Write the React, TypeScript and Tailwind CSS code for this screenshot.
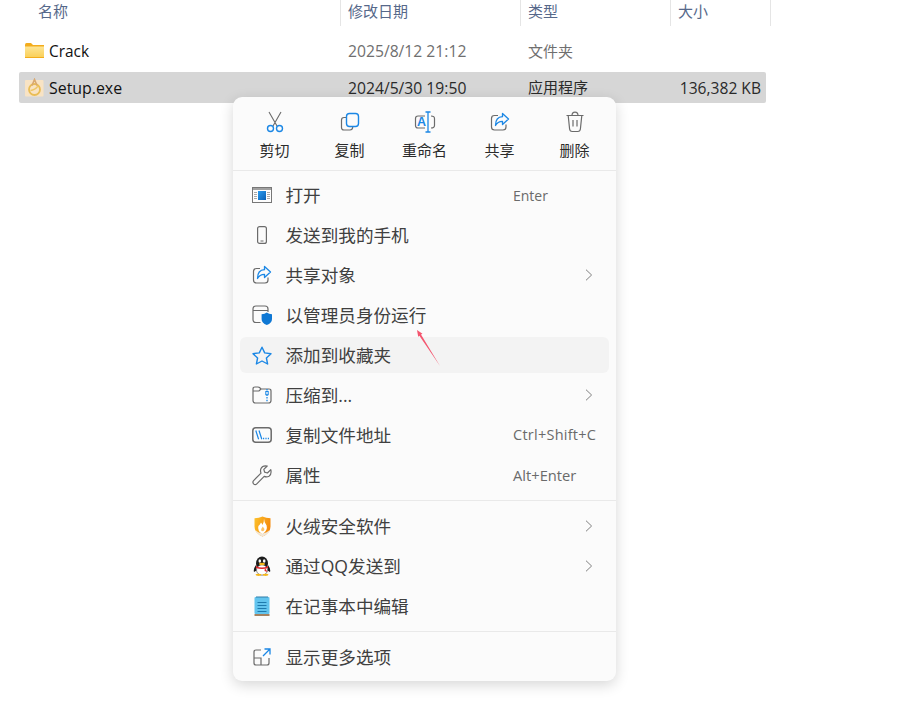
import type { ReactNode } from "react";

const gray = "#6b6b6b";
const blue = "#1b87e5";

function CutIcon() {
    return (
        <svg width="20" height="22" viewBox="0 0 20 22" fill="none">
            <path d="M4 1 L12 15 M16 1 L8 15" stroke={gray} strokeWidth="1.1" />
            <circle cx="5.5" cy="17.5" r="3" stroke={blue} strokeWidth="1.4" />
            <circle cx="14.5" cy="17.5" r="3" stroke={blue} strokeWidth="1.4" />
        </svg>
    );
}

function CopyIcon() {
    return (
        <svg width="20" height="20" viewBox="0 0 20 20" fill="none">
            <path d="M6 5.5 H4 Q1.5 5.5 1.5 8 V15.5 Q1.5 18 4 18 H10 Q12.5 18 12.8 15" stroke={gray} strokeWidth="1.2" />
            <rect x="6.5" y="1.5" width="12" height="13" rx="3" stroke={blue} strokeWidth="1.4" />
        </svg>
    );
}

function RenameIcon() {
    return (
        <svg width="22" height="22" viewBox="0 0 22 22" fill="none">
            <path d="M11 5 H4 Q1.5 5 1.5 7.5 V14.5 Q1.5 17 4 17 H11 M17 5 Q20.5 5 20.5 7.5 V14.5 Q20.5 17 17 17" stroke={gray} strokeWidth="1.2" />
            <path d="M14 1 V21 M11.5 1 H16.5 M11.5 21 H16.5" stroke={blue} strokeWidth="1.3" />
            <text x="7.6" y="15.2" textAnchor="middle" fontSize="12.5" fontWeight="600" fontFamily="Liberation Sans, sans-serif" fill={blue}>A</text>
        </svg>
    );
}

function ShareIcon() {
    return (
        <svg width="20" height="20" viewBox="0 0 20 20" fill="none">
            <path d="M8 3.5 H4.5 Q1.5 3.5 1.5 6.5 V15 Q1.5 18 4.5 18 H13 Q16 18 16 15 V12.5" stroke={gray} strokeWidth="1.2" />
            <path d="M12.5 1.5 L18.5 7 L12.5 12.5 V9.3 Q7.5 9.3 5.5 13.5 Q5.5 5 12.5 4.7 Z" stroke={blue} strokeWidth="1.3" strokeLinejoin="round" />
        </svg>
    );
}

function TrashIcon() {
    return (
        <svg width="20" height="22" viewBox="0 0 20 22" fill="none" stroke={gray} strokeWidth="1.2">
            <path d="M1.5 4.5 H18.5 M7 4.5 Q7 1.2 10 1.2 Q13 1.2 13 4.5" />
            <path d="M3.2 4.5 L4.6 18 Q4.9 20.5 7.2 20.5 H12.8 Q15.1 20.5 15.4 18 L16.8 4.5" />
            <path d="M8 9 V15.5 M12 9 V15.5" />
        </svg>
    );
}

function OpenIcon() {
    return (
        <svg width="20" height="16" viewBox="0 0 20 16" fill="none">
            <defs>
                <linearGradient id="open-fill" x1="0" y1="0" x2="1" y2="1">
                    <stop offset="0" stopColor="#2a9cf0" />
                    <stop offset="1" stopColor="#0a5fb4" />
                </linearGradient>
            </defs>
            <rect x="0.5" y="0.5" width="19" height="15" fill="#fdfdfd" stroke="#777" />
            <rect x="1" y="1" width="18" height="2" fill="#a0a0a0" />
            <path d="M2 5.5 H5 M2 7.5 H5 M2 9.5 H5 M2 11.5 H5 M15 5.5 H18 M15 7.5 H18 M15 9.5 H18 M15 11.5 H18" stroke="#a8a8a8" />
            <rect x="6" y="4" width="8" height="9" fill="url(#open-fill)" />
        </svg>
    );
}

function PhoneIcon() {
    return (
        <svg width="10" height="18" viewBox="0 0 10 18" fill="none">
            <rect x="0.6" y="0.6" width="8.8" height="16.8" rx="2" stroke={gray} strokeWidth="1.2" />
            <path d="M3.5 15 H6.5" stroke={gray} />
        </svg>
    );
}

function AdminIcon() {
    return (
        <svg width="20" height="20" viewBox="0 0 20 20" fill="none">
            <path d="M8.5 17.5 H4 Q1 17.5 1 14.5 V4 Q1 1 4 1 H13 Q16 1 16 4 V7 M1 5.5 H16" stroke={gray} strokeWidth="1.2" />
            <path d="M14.8 7.5 Q16.8 9.3 20 9.3 V14 Q20 18 14.8 20 Q9.6 18 9.6 14 V9.3 Q12.8 9.3 14.8 7.5 Z" fill="#0f78d4" />
        </svg>
    );
}

function StarIcon() {
    return (
        <svg width="20" height="19" viewBox="0 0 20 19" fill="none">
            <path d="M10 1.2 L12.7 6.9 L19 7.7 L14.4 12 L15.6 18 L10 15 L4.4 18 L5.6 12 L1 7.7 L7.3 6.9 Z" stroke={blue} strokeWidth="1.4" strokeLinejoin="round" />
        </svg>
    );
}

function ZipIcon() {
    return (
        <svg width="20" height="18" viewBox="0 0 20 18" fill="none">
            <path d="M1 3 V14.5 Q1 17 3.5 17 H16.5 Q19 17 19 14.5 V5 Q19 3 17 3 H9 L7.5 1.5 Q7 1 6 1 H3 Q1 1 1 3 V5 H7 L9 3" stroke={gray} strokeWidth="1.2" />
            <path d="M15 3 V16.5" stroke={blue} strokeWidth="1.3" strokeDasharray="1.5 1.2" />
            <rect x="13.8" y="5.5" width="2.4" height="3.2" fill="#fbfbfb" stroke={blue} strokeWidth="1" />
        </svg>
    );
}

function PathIcon() {
    return (
        <svg width="20" height="16" viewBox="0 0 20 16" fill="none">
            <rect x="0.8" y="0.8" width="18.4" height="14.4" rx="3" stroke={gray} strokeWidth="1.5" />
            <path d="M3.8 3.5 L6.6 12.3 M7 3.5 L9.8 12.3" stroke={blue} strokeWidth="1.2" />
            <path d="M11 11.5 H12.2 M13.4 11.5 H14.6 M15.8 11.5 H17" stroke={blue} strokeWidth="1.3" />
        </svg>
    );
}

function WrenchIcon() {
    return (
        <svg width="20" height="21" viewBox="0 0 20 21" fill="none">
            <path d="M18.8 4.6 L15.4 8 L12.6 7.2 L11.8 4.4 L15.2 1 Q10.5 0.2 9 3.5 Q8 5.8 9 8.2 L1.6 15.6 Q0.2 17.2 1.6 18.8 Q3.2 20.4 4.8 18.8 L12.2 11.4 Q14.8 12.4 17 11.2 Q19.8 9.4 18.8 4.6 Z" stroke={gray} strokeWidth="1.2" strokeLinejoin="round" />
        </svg>
    );
}

function HuorongIcon() {
    return (
        <svg width="17" height="21" viewBox="0 0 17 21" fill="none">
            <defs>
                <linearGradient id="huorong-fill" x1="0" y1="0" x2="1" y2="0.4">
                    <stop offset="0" stopColor="#fcc22c" />
                    <stop offset="1" stopColor="#f58a0c" />
                </linearGradient>
            </defs>
            <path d="M8.5 0.5 Q12 2 16.5 2.3 V10.5 Q16.5 17 8.5 20.5 Q0.5 17 0.5 10.5 V2.3 Q5 2 8.5 0.5 Z" fill="url(#huorong-fill)" />
            <path d="M8.5 20.5 Q2.5 18 1 13.5 Q4 17 8.5 17.5 Q13 17 16 13.5 Q14.5 18 8.5 20.5 Z" fill="#f1e7d8" />
            <path d="M10 2.5 Q10 6 12.6 9.5 Q14 14.5 8.5 18 Q3 15 4.4 10 Q6 8.5 7 6.5 Q8.2 7.5 8.4 9 Q10.2 6 10 2.5 Z" fill="#fff" />
            <path d="M8.8 10.5 Q10.8 12.5 10 14.5 Q8.6 16 7.2 14.5 Q6.8 13 8.8 10.5 Z" fill="#fbc061" />
        </svg>
    );
}

function QQIcon() {
    return (
        <svg width="18" height="20" viewBox="0 0 18 20" fill="none">
            <ellipse cx="9" cy="7.5" rx="6" ry="7" fill="#1c1c1c" />
            <path d="M3 9 Q0 13 1 16 L3.5 14.5 M15 9 Q18 13 17 16 L14.5 14.5" fill="#1c1c1c" />
            <ellipse cx="9" cy="14" rx="5.5" ry="5.2" fill="#fff" stroke="#222" strokeWidth="0.5" />
            <ellipse cx="6.8" cy="5" rx="1.3" ry="1.8" fill="#fff" />
            <ellipse cx="11.2" cy="5" rx="1.3" ry="1.8" fill="#fff" />
            <ellipse cx="9" cy="8" rx="3" ry="1.2" fill="#f6b81a" />
            <path d="M3 10 Q9 13 15 10 L15 12 Q9 14 3 12 Z" fill="#e0242a" />
            <path d="M12 12 L14.5 16 L11.5 15 Z" fill="#e0242a" />
            <ellipse cx="5.5" cy="18.8" rx="3" ry="1.1" fill="#f6b81a" />
            <ellipse cx="12.5" cy="18.8" rx="3" ry="1.1" fill="#f6b81a" />
        </svg>
    );
}

function NotepadIcon() {
    return (
        <svg width="16" height="20" viewBox="0 0 16 20" fill="none">
            <rect x="0.5" y="1" width="15" height="17" rx="1" fill="#62c4ee" />
            <rect x="0.5" y="18" width="15" height="2" fill="#a5825f" />
            <path d="M3 0 V2 M5 0 V2 M7 0 V2 M9 0 V2 M11 0 V2 M13 0 V2" stroke="#2f7da8" />
            <path d="M3.5 6.5 H12.5 M3.5 9.5 H12.5 M3.5 12.5 H12.5 M3.5 15.5 H12.5" stroke="#1e7aad" strokeWidth="1.1" />
        </svg>
    );
}

function MoreIcon() {
    return (
        <svg width="18" height="18" viewBox="0 0 18 18" fill="none">
            <path d="M8 2 H3 Q1 2 1 4 V15 Q1 17 3 17 H14 Q16 17 16 15 V10 M1 10 H8 V17" stroke={gray} strokeWidth="1.2" />
            <path d="M10 8 L17 1 M11.5 1 H17 V6.5" stroke={blue} strokeWidth="1.3" />
        </svg>
    );
}

function Chevron() {
    return (
        <svg width="8" height="12" viewBox="0 0 8 12" fill="none" className="ml-auto">
            <path d="M1 0.7 L6.6 6 L1 11.3" stroke="#808080" strokeWidth="1" />
        </svg>
    );
}

function ToolButton({ icon, label }: { icon: ReactNode; label: string }) {
    return (
        <div className="flex w-[75px] flex-col items-center">
            <div className="flex h-[22px] items-center justify-center">{icon}</div>
            <div className="mt-[7px] text-[15px] leading-[20px] text-[#2b2b2b]">{label}</div>
        </div>
    );
}

function MenuRow({ icon, label, shortcut, arrow, active }: {
    icon: ReactNode;
    label: string;
    shortcut?: ReactNode;
    arrow?: boolean;
    active?: boolean;
}) {
    return (
        <div className={`flex h-[36px] items-center rounded-[6px] pl-[10px] ${active ? "bg-[#f3f3f3]" : ""}`}>
            <div className="flex w-[24px] justify-center">{icon}</div>
            <div className="ml-[11.5px] flex-1 text-[17.6px] text-[#404040]">{label}</div>
            <div className="flex w-[96px] items-center pr-[16px]">
                {shortcut}
                {arrow && <Chevron />}
            </div>
        </div>
    );
}

function ContextMenu() {
    return (
        <div className="absolute left-[233px] top-[97px] w-[383px] rounded-[9px] bg-[#fbfbfb] shadow-[0_4px_14px_rgba(0,0,0,0.16)]">
            <div className="flex h-[73px] px-[4px] pt-[14px]">
                <ToolButton icon={<CutIcon />} label="剪切" />
                <ToolButton icon={<CopyIcon />} label="复制" />
                <ToolButton icon={<RenameIcon />} label="重命名" />
                <ToolButton icon={<ShareIcon />} label="共享" />
                <ToolButton icon={<TrashIcon />} label="删除" />
            </div>
            <div className="flex flex-col gap-1 border-t border-[#e9e9e9] px-[7px] pb-[7px] pt-[6px]">
                <MenuRow icon={<OpenIcon />} label="打开" shortcut={<span className="text-[14px] text-[#6a6a6a]">Enter</span>} />
                <MenuRow icon={<PhoneIcon />} label="发送到我的手机" />
                <MenuRow icon={<ShareIcon />} label="共享对象" arrow />
                <MenuRow icon={<AdminIcon />} label="以管理员身份运行" />
                <MenuRow icon={<StarIcon />} label="添加到收藏夹" active />
                <MenuRow icon={<ZipIcon />} label="压缩到..." arrow />
                <MenuRow icon={<PathIcon />} label="复制文件地址" shortcut={<span className="whitespace-nowrap text-[14.5px] tracking-[0.25px] text-[#6a6a6a]">Ctrl+Shift+C</span>} />
                <MenuRow icon={<WrenchIcon />} label="属性" shortcut={<span className="whitespace-nowrap text-[14.7px] text-[#6a6a6a]">Alt+Enter</span>} />
            </div>
            <div className="flex flex-col gap-1 border-t border-[#e9e9e9] px-[7px] py-[7px]">
                <MenuRow icon={<HuorongIcon />} label="火绒安全软件" arrow />
                <MenuRow icon={<QQIcon />} label="通过QQ发送到" arrow />
                <MenuRow icon={<NotepadIcon />} label="在记事本中编辑" />
            </div>
            <div className="border-t border-[#e9e9e9] px-[7px] pb-[6px] pt-[7px]">
                <MenuRow icon={<MoreIcon />} label="显示更多选项" />
            </div>
            {/* red annotation arrow drawn on top of the screenshot */}
            <svg width="26" height="40" viewBox="0 0 26 40" className="absolute left-[183px] top-[232px]">
                <path d="M1 1 L6.5 4.8 L5 5.6 L24 37 L3.4 6.8 L2.2 7.8 Z" fill="#f4566f" />
            </svg>
        </div>
    );
}

function HeaderCell({ label, className }: { label: string; className: string }) {
    return <div className={`h-[26px] border-r border-[#e5e5e5] text-[15px] leading-[22px] text-[#56688a] ${className}`}>{label}</div>;
}

export default function App() {
    return (
        <div className="relative h-[705px] w-[910px] overflow-hidden bg-white font-['Open_Sans','Noto_Sans_CJK_SC',sans-serif]">
            <div className="grid grid-cols-[341px_180px_150px_100px]">
                <HeaderCell label="名称" className="pl-[38px]" />
                <HeaderCell label="修改日期" className="pl-[7px]" />
                <HeaderCell label="类型" className="pl-[7px]" />
                <HeaderCell label="大小" className="pl-[7px]" />
            </div>
            <div className="mt-[8px] flex h-[34px] w-[766px] items-center">
                <div className="flex w-[341px] items-center pl-[25px]">
                    <svg width="19" height="15" viewBox="0 0 19 15">
                        <defs>
                            <linearGradient id="folder-fill" x1="0" y1="0" x2="0" y2="1">
                                <stop offset="0" stopColor="#fde595" />
                                <stop offset="1" stopColor="#fad05a" />
                            </linearGradient>
                        </defs>
                        <path d="M0 2 Q0 0 1.5 0 H6 L8 2 H19 V15 H0 Z" fill="#f3ac1c" />
                        <rect x="0" y="3.5" width="19" height="10.5" fill="url(#folder-fill)" />
                    </svg>
                    <span className="ml-[5px] mt-[2px] text-[15.4px] text-[#111]">Crack</span>
                </div>
                <div className="mt-[2px] w-[180px] pl-[7px] text-[15.7px] text-[#6f6f6f]">2025/8/12 21:12</div>
                <div className="pl-[7px] text-[15px] text-[#6f6f6f]">文件夹</div>
            </div>
            <div className="ml-[19px] mt-[4px] flex h-[31px] w-[747px] items-center rounded-[2px] bg-[#d6d6d6]">
                <div className="flex w-[322px] items-center pl-[6px]">
                    <svg width="19" height="19" viewBox="0 0 19 19" fill="none">
                        <rect x="0" y="2" width="18.5" height="16.5" rx="1" fill="#f8e3c4" />
                        <circle cx="9.5" cy="11.5" r="5.5" stroke="#e9bd55" strokeWidth="1.8" />
                        <path d="M7 7.5 L9.5 1.5 L12 7.5" stroke="#d9a870" strokeWidth="1.6" />
                        <path d="M5.5 12.5 Q10 12 13 8" stroke="#eec766" strokeWidth="1.3" />
                    </svg>
                    <span className="ml-[5px] mt-[2px] text-[15.9px] text-[#111]">Setup.exe</span>
                </div>
                <div className="mt-[2px] w-[180px] pl-[7px] text-[15.7px] text-[#2a2a2a]">2024/5/30 19:50</div>
                <div className="w-[150px] pl-[7px] text-[15px] text-[#2a2a2a]">应用程序</div>
                <div className="mt-[2px] flex-1 pr-[5px] text-right text-[15.6px] text-[#2a2a2a]">136,382 KB</div>
            </div>
            <ContextMenu />
        </div>
    );
}
